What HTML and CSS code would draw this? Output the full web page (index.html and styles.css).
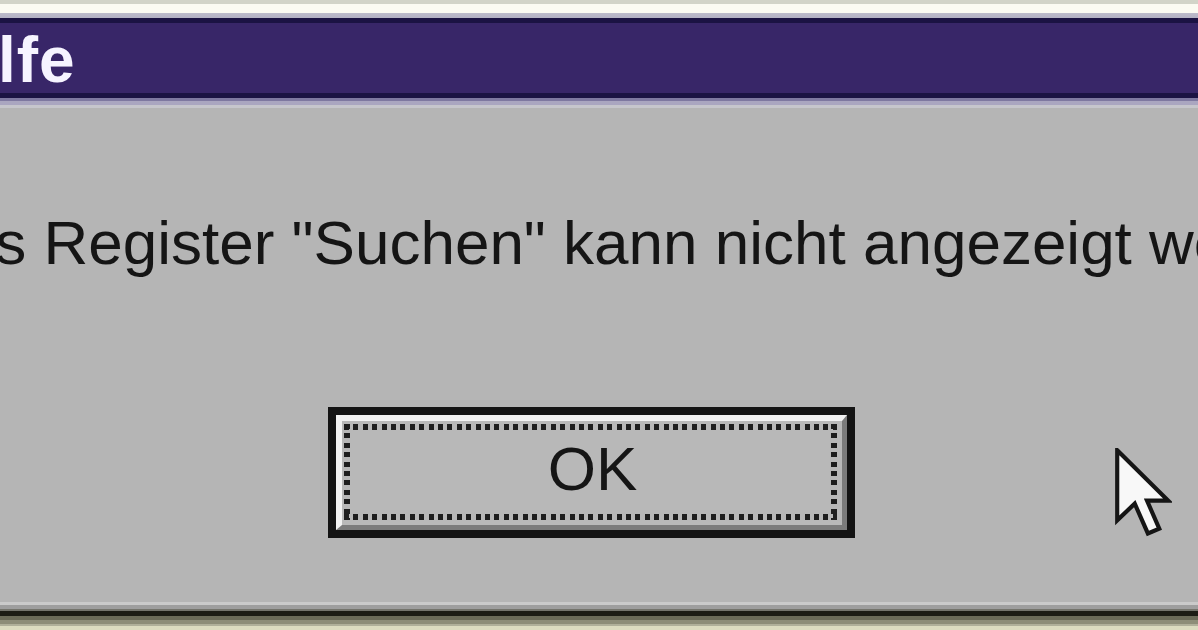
FILE: index.html
```html
<!DOCTYPE html>
<html lang="de">
<head>
<meta charset="utf-8">
<title>Hilfe</title>
<link rel="stylesheet" href="styles.css">
</head>
<body>
<div class="screen">
  <div class="desk-top"></div>
  <div class="frame-hi"></div>
  <div class="frame-face"></div>
  <div class="titlebar"><span class="title-text">Hilfe</span></div>
  <div class="title-sep"></div>
  <div class="dialog-body">
    <p class="message">Das Register "Suchen" kann nicht angezeigt werden.</p>
    <div class="button-row">
      <div class="btn">
        <div class="btn-bevel">
          <div class="btn-focus"><span class="btn-label">OK</span></div>
        </div>
      </div>
    </div>
  </div>
  <div class="frame-bottom"></div>
  <div class="desk-bottom"></div>
  <svg class="cursor" width="57" height="92" viewBox="-0.5 -0.5 13 21" aria-hidden="true">
    <polygon points="0,0 0,16 4,12.2 7,19 9.6,17.9 6.8,11.5 11.6,11.5" fill="#f8f8f8" stroke="#151515" stroke-width="0.95" stroke-linejoin="miter"/>
  </svg>
</div>
</body>
</html>
```
FILE: styles.css
```css
html, body {
  margin: 0;
  padding: 0;
  background: #b5b5b5;
}

.screen {
  position: relative;
  width: 1198px;
  height: 630px;
  overflow: hidden;
  display: flex;
  flex-direction: column;
  font-family: "Liberation Sans", Arial, sans-serif;
}

.desk-top {
  height: 4px;
  background: #d2d4c8;
}

.frame-hi {
  height: 9px;
  background: #fbfbf2;
}

.frame-face {
  height: 5px;
  background: linear-gradient(#bdbccb, #b3b1c3);
}

.titlebar {
  height: 70px;
  border-top: 5px solid #1b1343;
  border-bottom: 5px solid #1b1343;
  background: #382668;
  overflow: hidden;
  white-space: nowrap;
}

.title-text {
  display: block;
  margin-left: -68px;
  padding-top: 7px;
  font-size: 64px;
  line-height: 60px;
  font-weight: bold;
  color: #f6f4ff;
  letter-spacing: 1px;
}

.title-sep {
  height: 10px;
  background: linear-gradient(#7e78a0 0 3px, #aaa6c0 3px 7px, #c6c6cc 7px 10px);
}

.dialog-body {
  flex: 1;
  background: #b5b5b5;
  overflow: hidden;
  white-space: nowrap;
}

.message {
  margin: 104px 0 0 -84px;
  font-size: 62px;
  line-height: 62px;
  color: #151515;
}

.button-row {
  margin-top: 133px;
  padding-left: 328px;
  display: flex;
}

.btn {
  width: 511px;
  height: 115px;
  border: 8px solid #141414;
}

.btn-bevel {
  height: 100%;
  box-sizing: border-box;
  border-top: 6px solid #f2f2f2;
  border-left: 6px solid #f2f2f2;
  border-right: 5px solid #7c7c7c;
  border-bottom: 5px solid #7c7c7c;
  padding: 3px 5px 5px 2px;
  background: #b9b9b9;
}

.btn-focus {
  height: 100%;
  box-sizing: border-box;
  display: flex;
  justify-content: center;
  align-items: center;
  background:
    repeating-linear-gradient(90deg, #1e1e1e 0 5px, transparent 5px 9.4px) top left / 100% 6px no-repeat,
    repeating-linear-gradient(90deg, #1e1e1e 0 5px, transparent 5px 9.4px) bottom left / 100% 6px no-repeat,
    repeating-linear-gradient(180deg, #1e1e1e 0 5px, transparent 5px 9.4px) top left / 6px 100% no-repeat,
    repeating-linear-gradient(180deg, #1e1e1e 0 5px, transparent 5px 9.4px) top right / 6px 100% no-repeat,
    #b8b8b8;
}

.btn-label {
  font-size: 62px;
  line-height: 62px;
  color: #151515;
  padding-left: 4px;
  padding-bottom: 6px;
}

.frame-bottom {
  height: 14px;
  background: linear-gradient(#cacaca 0 3px, #9e9e9e 3px 7px, #74746c 7px 9px, #1c1c14 9px 14px);
}

.desk-bottom {
  height: 14px;
  background: linear-gradient(#6b6b58 0 4px, #8d8d78 4px 8px, #b0b09a 8px 10px, #dcdcc0 10px 14px);
}

.cursor {
  position: absolute;
  left: 1115px;
  top: 448px;
}
```
